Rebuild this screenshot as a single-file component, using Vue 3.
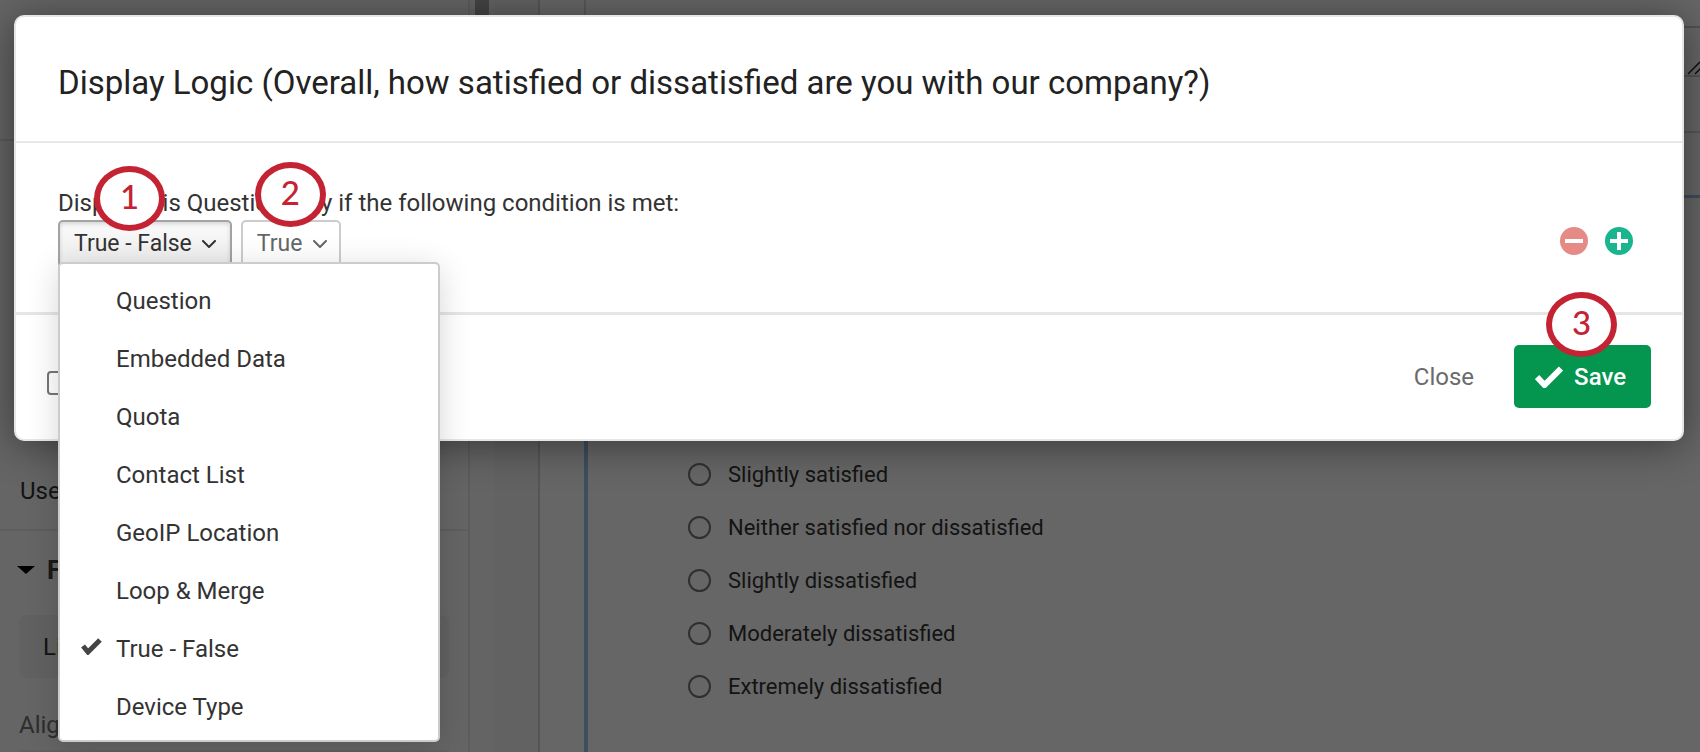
<script setup>
import { ref } from 'vue'

const sources = ['Question', 'Embedded Data', 'Quota', 'Contact List', 'GeoIP Location', 'Loop & Merge', 'True - False', 'Device Type']
const source = ref('True - False')
const menuOpen = ref(true)
const choices = ['Slightly satisfied', 'Neither satisfied nor dissatisfied', 'Slightly dissatisfied', 'Moderately dissatisfied', 'Extremely dissatisfied']

function pick(name) {
  source.value = name
  menuOpen.value = false
}
</script>

<template>
  <div class="app">
    <div class="page">
      <aside class="sidebar">
        <div class="side-top"></div>
        <div class="side-use">Use</div>
        <h2 class="side-head">
          <svg width="18" height="8" viewBox="0 0 18 8" aria-hidden="true"><path d="M0 0h18L9 8z" /></svg>
          <span>F</span>
        </h2>
        <button type="button" class="side-button">Li</button>
        <div class="side-align">Alig</div>
        <div class="side-box"></div>
      </aside>
      <div class="gutter"><div class="thumb"></div></div>
      <div class="strip"></div>
      <main class="canvas">
        <div class="card above">
          <textarea class="question-text" aria-label="Question text"></textarea>
          <svg class="grip" width="18" height="18" viewBox="0 0 18 18" aria-hidden="true"><path d="M3 16 15 4M10 16l6-6" /></svg>
        </div>
        <div class="spacer"></div>
        <section class="card current">
          <div class="choices">
            <label v-for="c in choices" :key="c" class="choice">
              <input type="radio" name="satisfaction" :value="c" />
              <span>{{ c }}</span>
            </label>
          </div>
        </section>
      </main>
    </div>

    <div class="overlay">
      <div class="modal" role="dialog" aria-modal="true" aria-labelledby="title">
        <header class="modal-head">
          <h1 id="title">Display Logic (Overall, how satisfied or dissatisfied are you with our company?)</h1>
        </header>
        <div class="modal-body">
          <p class="lead">Display this Question only if the following condition is met:</p>
          <div class="row">
            <div class="drop">
              <button type="button" class="drop-button" aria-haspopup="listbox" :aria-expanded="menuOpen" @click="menuOpen = !menuOpen">
                {{ source }}
                <svg class="chev" width="14" height="9" viewBox="0 0 14 9" aria-hidden="true"><path d="M1 1l6 6 6-6" /></svg>
              </button>
              <ul v-if="menuOpen" class="menu" role="listbox" aria-label="Condition source">
                <li v-for="s in sources" :key="s" role="option" :aria-selected="s === source" @click="pick(s)">
                  <svg v-if="s === source" class="tick" width="21" height="17" viewBox="0 0 21 17" aria-hidden="true"><path d="M2 8l5 6L19 2" /></svg>
                  <span>{{ s }}</span>
                </li>
              </ul>
              <span class="badge one">1</span>
            </div>
            <div class="drop">
              <select class="drop-select" aria-label="Expected value">
                <option>True</option>
              </select>
              <svg class="chev over" width="14" height="9" viewBox="0 0 14 9" aria-hidden="true"><path d="M1 1l6 6 6-6" /></svg>
              <span class="badge two">2</span>
            </div>
            <div class="tools">
              <button type="button" class="round minus" aria-label="Remove condition">
                <svg width="28" height="28" viewBox="0 0 28 28" aria-hidden="true"><circle cx="14" cy="14" r="14" /><path d="M5 14h18" /></svg>
              </button>
              <button type="button" class="round plus" aria-label="Add condition">
                <svg width="28" height="28" viewBox="0 0 28 28" aria-hidden="true"><circle cx="14" cy="14" r="14" /><path d="M5 14h18M14 5v18" /></svg>
              </button>
            </div>
          </div>
        </div>
        <footer class="modal-foot">
          <input type="checkbox" class="box" aria-label="In page" />
          <div class="actions">
            <button type="button" class="close">Close</button>
            <div class="drop">
              <button type="button" class="save">
                <svg width="28" height="22" viewBox="0 0 28 22" aria-hidden="true"><path d="M2 11l7.500 8L26 2.500" /></svg>
                Save
              </button>
              <span class="badge three">3</span>
            </div>
          </div>
        </footer>
      </div>
    </div>
  </div>
</template>

<style>
body {
  background: #666;
}
</style>

<style scoped>
.app {
  position: relative;
  min-height: 100vh;
  overflow: hidden;
  font-family: Roboto, "Liberation Sans", sans-serif;
  font-size: 24px;
  line-height: 30px;
  color: #333;
}
.app * {
  box-sizing: border-box;
}
button, select {
  font: inherit;
  color: inherit;
}
.page {
  display: flex;
  min-height: 100vh;
  background: #fff;
}
.sidebar {
  width: 470px;
  flex: none;
  background: #fcfcfc;
  border-right: 2px solid #e8e8e8;
}
.side-top {
  height: 141px;
  border-bottom: 2px solid #e3e3e3;
}
.side-use {
  padding: 335px 20px 23px;
  border-bottom: 2px solid #eaeaea;
}
.side-head {
  display: flex;
  align-items: center;
  gap: 12px;
  margin: 0;
  padding: 24px 17px 30px;
  font-size: 26px;
  color: #404040;
}
.side-head svg {
  fill: #000;
}
.side-button {
  display: block;
  width: 430px;
  height: 63px;
  margin: 0 19px;
  padding: 0 24px;
  text-align: left;
  background: #f2f2f2;
  border: 0;
  border-radius: 8px;
}
.side-align {
  padding: 32px 19px 10px;
  color: #737373;
}
.side-box {
  height: 2px;
  margin: 0 19px;
  background: #f0f0f0;
}
.gutter {
  width: 24px;
  flex: none;
  padding-left: 5px;
  background: #fafafa;
}
.thumb {
  width: 14px;
  height: 120px;
  background: #aaa;
}
.strip {
  width: 46px;
  flex: none;
  background: #f6f6f6;
  border-right: 2px solid #d4d4d4;
}
.canvas {
  flex: 1;
  display: flex;
  flex-direction: column;
}
.card {
  margin-left: 44px;
}
.above {
  position: relative;
  height: 133px;
  padding: 26px 0 0 40px;
  border-left: 2px solid #ddd;
  border-bottom: 2px solid #d8d8d8;
}
.question-text {
  display: block;
  width: 100%;
  height: 51px;
  border: 2px solid #ccc;
  border-right: 0;
  resize: none;
}
.grip {
  position: absolute;
  right: -3px;
  top: 58px;
  fill: none;
  stroke: #222;
  stroke-width: 1.500;
}
.spacer {
  height: 62px;
}
.current {
  flex: 1;
  border-left: 4px solid #9bc3e8;
  border-top: 3px solid #9bc3e8;
}
.choices {
  display: grid;
  gap: 22px;
  padding: 261px 100px 0;
}
.choice {
  display: flex;
  align-items: center;
  gap: 17px;
  font-size: 22px;
  line-height: 31px;
}
.choice input {
  appearance: none;
  width: 23px;
  height: 23px;
  margin: 0;
  border: 2px solid #777;
  border-radius: 50%;
}
.overlay {
  position: absolute;
  inset: 0;
  padding: 15px 16px 0 14px;
  background: rgba(0, 0, 0, 0.6);
}
.modal {
  background: #fff;
  border: 2px solid #e6e6e6;
  border-radius: 10px;
  box-shadow: 0 4px 40px rgba(0, 0, 0, 0.45);
}
.modal-head {
  padding: 48px 42px 40px;
  border-bottom: 2px solid #e8e8e8;
}
h1 {
  margin: 0;
  font-size: 33px;
  font-weight: 400;
  line-height: 36px;
  color: #222;
}
.modal-body {
  padding: 45px 49px 44px 42px;
  border-bottom: 3px solid #e6e6e6;
}
.lead {
  margin: 0 0 2px;
}
.row {
  display: flex;
  align-items: flex-start;
  gap: 9px;
}
.drop {
  position: relative;
}
.drop-button, .drop-select {
  display: flex;
  align-items: center;
  height: 48px;
  padding: 0 14px;
  font-size: 23px;
  border: 2px solid #ccc;
  border-radius: 5px;
  background: #fff;
}
.drop-button {
  gap: 10px;
  border-color: #a3a3a3;
  background: linear-gradient(#fafafa, #ededed);
  box-shadow: inset 0 2px 4px rgba(0, 0, 0, 0.15);
}
.drop-select {
  appearance: none;
  padding-right: 36px;
  color: #666;
}
.chev {
  fill: none;
  stroke: #333;
  stroke-width: 2;
  stroke-linecap: round;
  stroke-linejoin: round;
}
.over {
  position: absolute;
  right: 14px;
  top: 20px;
  stroke: #666;
  pointer-events: none;
}
.menu {
  position: absolute;
  z-index: 2;
  left: 0;
  top: 42px;
  width: 382px;
  margin: 0;
  padding: 8px 0 4px;
  list-style: none;
  background: #fff;
  border: 2px solid #ccc;
  border-radius: 5px;
  box-shadow: 0 6px 32px rgba(0, 0, 0, 0.16);
}
.menu li {
  position: relative;
  padding: 14px 56px;
}
.tick {
  position: absolute;
  left: 21px;
  top: 18px;
  fill: none;
  stroke: #444;
  stroke-width: 5;
}
.badge {
  position: absolute;
  z-index: 3;
  width: 71px;
  height: 65px;
  border: 6px solid #c32332;
  border-radius: 50%;
  background: #fff;
  color: #c32332;
  font-family: Lato, "DejaVu Sans", sans-serif;
  font-size: 33px;
  font-weight: 500;
  line-height: 48px;
  text-align: center;
}
.one {
  left: 36px;
  top: -54px;
}
.two {
  left: 14px;
  top: -58px;
}
.three {
  left: 32px;
  top: -53px;
}
.tools {
  display: flex;
  gap: 17px;
  margin-left: auto;
  padding-top: 7px;
}
.round {
  width: 28px;
  height: 28px;
  padding: 0;
  border: 0;
  background: none;
}
.round svg {
  display: block;
}
.round path {
  stroke: #fff;
  stroke-width: 4;
}
.minus circle {
  fill: #e68a85;
}
.plus circle {
  fill: #1ab58f;
}
.modal-foot {
  display: flex;
  align-items: center;
  justify-content: space-between;
  padding: 30px 31px 31px;
}
.box {
  appearance: none;
  width: 24px;
  height: 24px;
  margin: 12px 0 0;
  border: 2px solid #767676;
  border-radius: 4px;
}
.actions {
  display: flex;
  align-items: center;
  gap: 40px;
}
.close {
  padding: 0;
  border: 0;
  background: none;
  color: #6b6b6b;
}
.save {
  display: flex;
  align-items: center;
  gap: 11px;
  height: 63px;
  padding: 0 25px 0 21px;
  border: 0;
  border-radius: 5px;
  background: #04954f;
  color: #fff;
  font-weight: 500;
}
.save svg {
  fill: none;
  stroke: #fff;
  stroke-width: 6;
}
</style>
